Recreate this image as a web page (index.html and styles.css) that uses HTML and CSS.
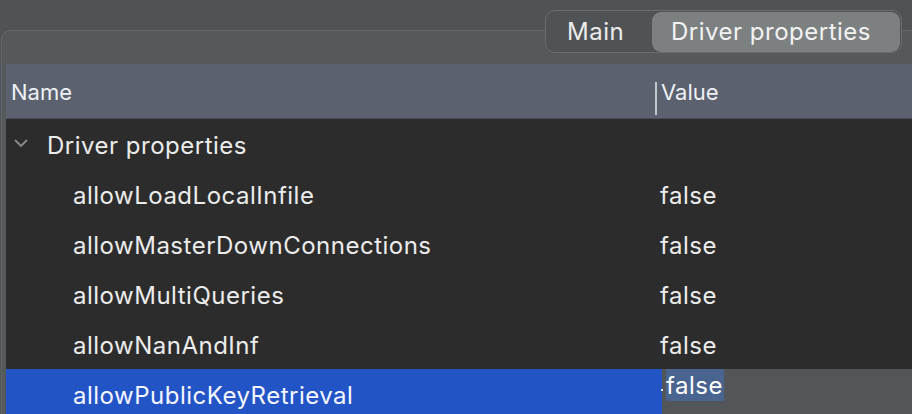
FILE: index.html
```html
<!DOCTYPE html>
<html>
<head>
<meta charset="utf-8">
<link rel="stylesheet" href="styles.css">
</head>
<body>
<div class="window">
  <div class="segmented">
    <div class="seg">Main</div>
    <div class="seg seg-active">Driver properties</div>
  </div>
  <div class="panel">
    <div class="table">
      <div class="thead">
        <div class="th th-name">Name</div>
        <div class="th th-value"><span class="divider"></span>Value</div>
      </div>
      <div class="tbody">
        <div class="row group">
          <div class="cell name">
            <svg class="chev" width="14" height="9" viewBox="0 0 14 9"><path d="M1.5 1.5 L7 7 L12.5 1.5" fill="none" stroke="#8a8a8c" stroke-width="1.8" stroke-linecap="round" stroke-linejoin="round"/></svg>
            <span>Driver properties</span>
          </div>
          <div class="cell value"></div>
        </div>
        <div class="row"><div class="cell name child">allowLoadLocalInfile</div><div class="cell value">false</div></div>
        <div class="row"><div class="cell name child">allowMasterDownConnections</div><div class="cell value">false</div></div>
        <div class="row"><div class="cell name child">allowMultiQueries</div><div class="cell value">false</div></div>
        <div class="row"><div class="cell name child">allowNanAndInf</div><div class="cell value">false</div></div>
        <div class="row selected">
          <div class="cell name child">allowPublicKeyRetrieval</div>
          <div class="cell editor"><span class="dot"></span><span class="sel">false</span></div>
        </div>
      </div>
    </div>
  </div>
</div>
</body>
</html>
```

FILE: styles.css
```css
html, body {
  margin: 0;
  padding: 0;
}
body {
  background: #505356;
  width: 912px;
  height: 414px;
  overflow: hidden;
  font-family: Inter, "Open Sans", "Liberation Sans", sans-serif;
  font-size: 24px;
  letter-spacing: 0.5px;
  color: #ececec;
}
.window {
  position: relative;
  width: 912px;
  height: 414px;
  overflow: hidden;
  padding-top: 30px;
  box-sizing: border-box;
}
.segmented {
  position: absolute;
  top: 10px;
  left: 545px;
  width: 357px;
  height: 43px;
  box-sizing: border-box;
  border: 1px solid #6a6d6f;
  border-radius: 10px;
  background: #505356;
  display: flex;
  align-items: center;
  padding: 0 1px 0 0;
  z-index: 2;
}
.seg {
  height: 40px;
  display: flex;
  align-items: center;
  padding: 0 19px 0 21px;
  color: #ececec;
}
.seg-active {
  margin-left: auto;
  width: 248px;
  box-sizing: border-box;
  padding-left: 19px;
  background: #7d8081;
  border-radius: 9px;
  color: #f2f2f2;
}
.panel {
  margin-left: 1px;
  width: 960px;
  height: 420px;
  box-sizing: border-box;
  border: 1px solid #65686a;
  border-radius: 9px;
  background: #56595b;
  padding: 33px 0 0 4px;
}
.table {
  display: flex;
  flex-direction: column;
}
.thead {
  display: flex;
  height: 55px;
  background: #5b616e;
  border-bottom: 1px solid #4a4d54;
  box-sizing: border-box;
  font-size: 22px;
  letter-spacing: 0;
}
.th {
  display: flex;
  align-items: center;
  color: #eef0f6;
  padding-top: 2px;
}
.th-name {
  width: 649px;
  padding-left: 5px;
  box-sizing: border-box;
}
.th-value {
  position: relative;
  padding-left: 6px;
}
.divider {
  position: absolute;
  left: 0;
  top: 18px;
  width: 2px;
  height: 33px;
  background: #c3c6cc;
}
.tbody {
  background: #2c2c2c;
  display: flex;
  flex-direction: column;
}
.row {
  display: flex;
  height: 50px;
  align-items: stretch;
}
.cell {
  display: flex;
  align-items: center;
  padding-top: 2px;
  box-sizing: border-box;
}
.name {
  width: 649px;
}
.group .name {
  padding-left: 8px;
}
.chev {
  margin-right: 19px;
  margin-top: -3px;
}
.child {
  padding-left: 67px;
}
.value {
  padding-left: 5px;
  color: #ececec;
}
.selected {
  background: #2354c6;
}
.selected .name {
  width: 656px;
  color: #f4f6ff;
}
.editor {
  flex: 1;
  background: #535659;
  padding-left: 4px;
  padding-top: 0;
  align-items: flex-start;
  position: relative;
}
.sel {
  background: #48648f;
  height: 32px;
  line-height: 33px;
  padding: 0 1px 0 0;
  color: #ffffff;
}
.dot {
  position: absolute;
  left: -1px;
  top: 20px;
  width: 2px;
  height: 2px;
  background: #dfe3ea;
}
```
